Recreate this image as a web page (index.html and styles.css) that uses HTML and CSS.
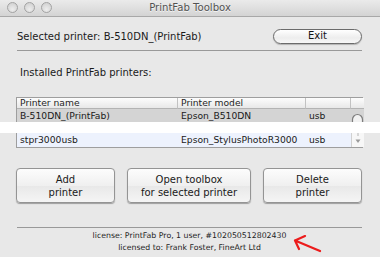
FILE: index.html
```html
<!DOCTYPE html>
<html lang="en">

<head>
  <meta charset="UTF-8">
  <title>PrintFab Toolbox</title>
  <link rel="stylesheet" href="styles.css">
</head>

<body>
  <div class="window">
    <header class="titlebar">
      <div class="lights">
        <span class="light"></span>
        <span class="light"></span>
        <span class="light"></span>
      </div>
      <h1 class="title">PrintFab Toolbox</h1>
      <div></div>
    </header>

    <main class="content">
      <div class="selected">
        <p>Selected printer: B-510DN_(PrintFab)</p>
        <button class="exit">Exit</button>
      </div>
      <hr class="rule">

      <p class="installed">Installed PrintFab printers:</p>

      <div class="grid grid-top">
        <div class="cell head">Printer name</div>
        <div class="cell head">Printer model</div>
        <div class="cell head"></div>
        <div class="cell head bar"></div>

        <div class="cell row-sel">B-510DN_(PrintFab)</div>
        <div class="cell row-sel">Epson_B510DN</div>
        <div class="cell row-sel">usb</div>
        <div class="cell row-sel bar">
          <svg width="13" height="13" viewBox="0 0 13 13">
            <path d="M1.5 13 V10.5 A5 5 0 0 1 11.5 10.5 V13" fill="#f2f2f2" stroke="#7d7d7d" stroke-width="1.2" />
          </svg>
        </div>
      </div>

      <div class="cut"></div>

      <div class="grid grid-bottom">
        <div class="cell row-alt">stpr3000usb</div>
        <div class="cell row-alt">Epson_StylusPhotoR3000</div>
        <div class="cell row-alt">usb</div>
        <div class="cell row-alt bar bar-end">
          <svg width="12" height="14" viewBox="0 0 12 14">
            <path d="M6 0 V3" stroke="#b5b5b5" stroke-width="1" />
            <path d="M3.5 6.5 H8.5 L6 10 Z" fill="#9a9a9a" />
          </svg>
        </div>
      </div>

      <div class="actions">
        <button class="action action-add">Add<br>printer</button>
        <button class="action action-open">Open toolbox<br>for selected printer</button>
        <button class="action action-del">Delete<br>printer</button>
      </div>

      <footer class="license">
        <hr class="rule">
        <p>license: PrintFab Pro, 1 user, #102050512802430<br>licensed to: Frank Foster, FineArt Ltd</p>
        <svg class="arrow" width="30" height="18" viewBox="0 0 30 18">
          <path d="M27 16 L2 5.5 M2 5.5 L12 1 M2 5.5 L6 14" fill="none" stroke="#ec1c1c" stroke-width="2.2" stroke-linecap="round" />
        </svg>
      </footer>
    </main>
  </div>
</body>

</html>
```

FILE: styles.css
```css
/* Globals */
* {
  box-sizing: border-box;
  margin: 0;
}

body {
  font-family: 'DejaVu Sans', 'Liberation Sans', sans-serif;
  font-size: 10px;
  color: hsl(0deg 0% 10%);
  background: hsl(0deg 0% 91%);
}

.window {
  position: relative;
  inline-size: 380px;
  block-size: 257px;
  overflow: hidden;
  background: hsl(0deg 0% 91%);
}

/* Title bar */
.titlebar {
  display: grid;
  grid-template-columns: 1fr auto 1fr;
  align-items: center;
  block-size: 17px;
  background: linear-gradient(hsl(0deg 0% 92%), hsl(0deg 0% 83%));
  border-block-end: 1px solid hsl(0deg 0% 66%);
}

.lights {
  display: flex;
  gap: 6px;
  padding-inline-start: 7px;
  padding-block-end: 1px;
}

.light {
  inline-size: 11px;
  block-size: 11px;
  border-radius: 50%;
  border: 1px solid hsl(0deg 0% 64%);
  background: radial-gradient(circle at 50% 70%, hsl(0deg 0% 93%), hsl(0deg 0% 80%));
}

.title {
  font-size: 10.1px;
  font-weight: 400;
  color: hsl(0deg 0% 32%);
  text-shadow: 0 1px 0 hsl(0deg 0% 96%);
  padding-block-end: 1px;
}

/* Content */
.content {
  padding-inline: 17px 18px;
}

.selected {
  display: flex;
  justify-content: space-between;
  align-items: center;
  block-size: 33px;
  padding-block-start: 5px;
}

.exit {
  inline-size: 89px;
  block-size: 15px;
  font: inherit;
  line-height: 1;
  color: hsl(0deg 0% 8%);
  border-radius: 8px;
  border: 1px solid hsl(0deg 0% 42%);
  background: linear-gradient(hsl(0deg 0% 100%), hsl(0deg 0% 93%) 60%, hsl(0deg 0% 97%));
  box-shadow: 0 1px 1px hsl(0deg 0% 70%);
  padding: 0;
}

.rule {
  border: 0;
  block-size: 1px;
  background: hsl(0deg 0% 60%);
}

.installed {
  margin-block-start: 15px;
  padding-inline-start: 3px;
  line-height: 14px;
}

/* Printer list */
.grid {
  display: grid;
  grid-template-columns: 161px 128px 45px 13px;
  inline-size: 347px;
  margin-inline-start: -1px;
  border-inline: 1px solid hsl(0deg 0% 62%);
  font-size: 9.2px;
}

.grid-top {
  margin-block-start: 17px;
  border-block-start: 1px solid hsl(0deg 0% 62%);
}

.grid-bottom {
  border-block-end: 1px solid hsl(0deg 0% 62%);
}

.cell {
  padding-inline-start: 3px;
  white-space: nowrap;
}

.head {
  block-size: 11px;
  line-height: 10px;
  background: linear-gradient(hsl(0deg 0% 99%), hsl(0deg 0% 91%));
  border-block-end: 1px solid hsl(0deg 0% 70%);
  border-inline-end: 1px solid hsl(0deg 0% 76%);
  color: hsl(0deg 0% 12%);
}

.head.bar {
  border-inline-end: 0;
}

.row-sel {
  block-size: 13px;
  line-height: 13px;
  background: hsl(0deg 0% 83%);
}

.row-alt {
  block-size: 14px;
  line-height: 14px;
  background: hsl(220deg 80% 96%);
}

.bar {
  padding: 0;
  display: flex;
  justify-content: center;
}

.bar-end {
  background: hsl(0deg 0% 97%);
  border-inline-start: 1px solid hsl(0deg 0% 82%);
}

.cut {
  block-size: 11px;
  margin-inline: -17px -18px;
  background: hsl(0deg 0% 100%);
}

/* Buttons */
.actions {
  display: flex;
  gap: 12px;
  margin-block-start: 20px;
  margin-inline-start: -1px;
}

.action {
  block-size: 35px;
  font: inherit;
  line-height: 13px;
  color: hsl(0deg 0% 10%);
  border-radius: 4px;
  border: 1px solid hsl(0deg 0% 58%);
  background: linear-gradient(hsl(0deg 0% 99%), hsl(0deg 0% 94%) 50%, hsl(0deg 0% 91%) 51%, hsl(0deg 0% 96%));
  box-shadow: 0 1px 1px hsl(0deg 0% 62%);
  padding: 0;
}

.action-add,
.action-del {
  inline-size: 99px;
}

.action-open {
  inline-size: 124px;
}

/* License footer */
.license {
  position: relative;
  margin-block-start: 24px;
  text-align: center;
}

.license p {
  margin-block-start: 2px;
  font-size: 7.8px;
  line-height: 12px;
  color: hsl(0deg 0% 12%);
}

.arrow {
  position: absolute;
  left: 276px;
  top: 8px;
}
```
